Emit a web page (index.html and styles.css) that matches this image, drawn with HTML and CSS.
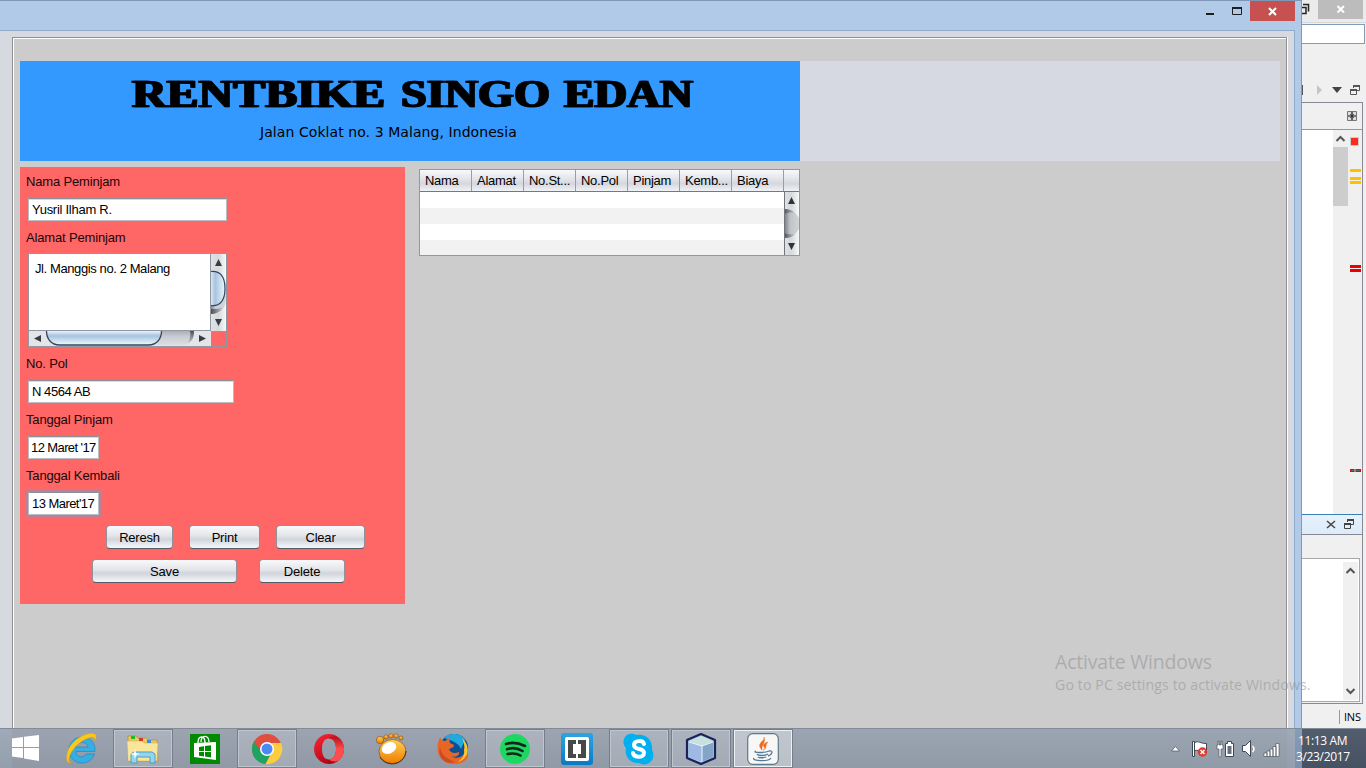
FILE: index.html
```html
<!DOCTYPE html>
<html lang="id">
<head>
<meta charset="utf-8">
<title>Rentbike Singo Edan</title>
<link rel="stylesheet" href="styles.css">
</head>
<body>
<main class="desktop">
  <section class="ide">
    <div class="ide-title"><svg width="64" height="22"><path d="M0 7.500h4v6H0M1 4.500h5.500v7" fill="none" stroke="#222" stroke-width="1.500"/><path d="M16 0h45v19H16z" fill="#bcbcbc"/><path d="m35.500 6 6.500 6.500m0-6.500-6.500 6.500" stroke="#fff" stroke-width="2"/></svg></div>
    <div class="ide-search"></div>
    <div class="ide-tools"><svg width="64" height="14"><path d="M0 2h1v10H0z" fill="#555"/><path d="m15 2 5 5-5 5z" fill="#c5c5c5"/><path d="M30 4h10l-5 6z" fill="#444"/><g fill="none" stroke="#555"><path d="M48.500 6.500h6v5h-6zM51.500 5V2.500h6v5H55"/><path d="M48 7h7M51 3h7" stroke-width="2"/></g></svg></div>
    <div class="ide-editor">
      <div class="ide-tab"><svg width="11" height="11"><path d="M.5.500h9v9h-9z" fill="#ddd" stroke="#777"/><path d="M5 1v8M1 5h8" stroke="#111" stroke-width="1.200"/><path d="m3 3 4 4m0-4L3 7" stroke="#333" stroke-width=".7"/></svg></div>
      <div class="ide-code">
        <div class="ide-scroll"><svg width="15" height="16"><path d="m3.500 11 4-4 4 4" fill="none" stroke="#555" stroke-width="2"/></svg><i class="thumb"></i></div>
        <svg class="marks" width="14" height="383"><path d="M2 6h9v9H2z" fill="#ccc"/><path d="M3 7h7v7H3z" fill="#ff2a1c"/><path d="M2 38h11v3H2zM2 46h11v3H2zM2 50h11v3H2z" fill="#ffc000"/><path d="M2 134h11v3H2zM2 138h11v3H2z" fill="#e00"/><path d="M2 338h11v3H2z" fill="#e00"/><path d="M3 339h9v1H3z" fill="#666"/><path d="M6 338h2v3H6z" fill="#888"/></svg>
      </div>
    </div>
    <div class="ide-output">
      <div class="out-tab"><svg width="60" height="19"><path d="m25 6 8 7m0-7-8 7" stroke="#444" stroke-width="1.500"/><g fill="none" stroke="#444"><path d="M42.500 8.500h6v5h-6zM45.500 7V4.500h6v5H49"/><path d="M42 9h7M45 5h7" stroke-width="2"/></g></svg></div>
      <div class="out-box"><svg width="15" height="138"><path d="m3.500 11 4-4 4 4m-8 116 4 4 4-4" fill="none" stroke="#555" stroke-width="2"/></svg></div>
    </div>
    <div class="ide-status"><span>INS</span></div>
  </section>

  <section class="window">
    <header class="titlebar"><svg class="controls" width="104" height="29"><path d="M14 12h8v2h-8z" fill="#1e1e1e"/><path d="M40.500 6.500h9v7h-9z" fill="none" stroke="#1e1e1e"/><path d="M40 7h10" stroke="#1e1e1e" stroke-width="2"/><path d="M58 0h45v20H58z" fill="#c75050"/><path d="m77 7 7 7m0-7-7 7" stroke="#fff" stroke-width="2"/></svg></header>
    <div class="client">
      <div class="etched">
        <div class="banner"><div class="brand">
          <svg class="logo" width="580" height="44"><text x="10" y="35.500" textLength="253" lengthAdjust="spacingAndGlyphs">RENTBIKE</text><text x="279" y="35.500" textLength="149" lengthAdjust="spacingAndGlyphs">SINGO</text><text x="442" y="35.500" textLength="129" lengthAdjust="spacingAndGlyphs">EDAN</text></svg>
          <p class="address">Jalan Coklat no. 3 Malang, Indonesia</p>
        </div></div>
        <div class="body">
          <form class="form">
            <label>Nama Peminjam</label>
            <div class="field name">Yusril Ilham R.</div>
            <label>Alamat Peminjam</label>
            <div class="area">
              <div class="area-text">Jl. Manggis no. 2 Malang</div>
              <svg class="vbar" width="15" height="77"><defs><linearGradient id="tr"><stop stop-color="#858a92"/><stop offset=".3" stop-color="#c8cbd1"/><stop offset="1" stop-color="#d6d8dc"/></linearGradient><linearGradient id="bl"><stop stop-color="#d5e6f5"/><stop offset=".3" stop-color="#a9c3de"/><stop offset="1" stop-color="#eaf8ff"/></linearGradient><linearGradient id="bt"><stop stop-color="#dfe2e6"/><stop offset=".5" stop-color="#d5dadd"/><stop offset="1" stop-color="#f7fafa"/></linearGradient><linearGradient id="sh"><stop stop-color="#4c5058"/><stop offset="1" stop-color="#c4c7cc"/></linearGradient></defs><path d="M0 0h15v77H0z" fill="url(#bt)"/><path d="M0 17h1c9 0 14 6 14 17v11c0 9-6 15-15 15z" fill="url(#tr)"/><path d="M0 55c6 0 9 0 12-2-2 4-6 7-12 7z" fill="url(#sh)"/><path d="M0 17.500c9-1 14 5 14 17s-5 18-14 17" fill="url(#bl)" stroke="#33475f" stroke-width="1.200"/><path d="m7.500 5 3.500 7H4zM4 65h7l-3.500 7z" fill="#393c40"/></svg>
              <svg class="hbar" width="182" height="15"><defs><linearGradient id="hb" x2="0" y2="1"><stop stop-color="#e6f2fd"/><stop offset=".35" stop-color="#a9c3de"/><stop offset="1" stop-color="#edfaff"/></linearGradient><linearGradient id="ht" x2="0" y2="1"><stop stop-color="#aaaeb6"/><stop offset=".4" stop-color="#c9ccd2"/><stop offset="1" stop-color="#dcdee1"/></linearGradient><linearGradient id="hs" x2="0" y2="1"><stop stop-color="#4c5058"/><stop offset="1" stop-color="#c4c7cc"/></linearGradient></defs><path d="M0 0h182v15H0z" fill="#e2e6e9"/><path d="M17 0h148c0 8-4 14-12 14H30C20 14 17 8 17 0z" fill="url(#ht)"/><path d="M161 0h4c0 7-2 10-6 12 2-4 3-8 2-12z" fill="url(#hs)"/><path d="M17.500 0c0 8 5 14 13 14h89c8 0 13-6 13-14" fill="url(#hb)" stroke="#33475f" stroke-width="1.300"/><path d="m5 7.500 7-3.500v7zM170 4l7 3.500-7 3.500z" fill="#393c40"/></svg>
              <div class="corner"></div>
            </div>
            <label>No. Pol</label>
            <div class="field plate">N 4564 AB</div>
            <label>Tanggal Pinjam</label>
            <div class="field date">12 Maret '17</div>
            <label>Tanggal Kembali</label>
            <div class="field date focus">13 Maret'17</div>
            <div class="buttons first"><button type="button" class="b1">Reresh</button><button type="button" class="b2">Print</button><button type="button" class="b3">Clear</button></div>
            <div class="buttons second"><button type="button" class="b4">Save</button><button type="button" class="b5">Delete</button></div>
          </form>
          <div class="table">
            <div class="thead"><span>Nama</span><span>Alamat</span><span>No.St...</span><span>No.Pol</span><span>Pinjam</span><span>Kemb...</span><span>Biaya</span></div>
            <div class="tbody"><div class="rows"></div>
              <svg width="15" height="63"><defs><linearGradient id="ts"><stop stop-color="#74777d"/><stop offset=".4" stop-color="#c0c2c7"/><stop offset="1" stop-color="#d2d4d8"/></linearGradient></defs><path d="M0 0h15v63H0z" fill="url(#bt)"/><path d="M0 17c7 0 11 3 15 9v11c-4 6-8 9-15 9z" fill="url(#ts)"/><path d="M0 17c5 0 8 1 11 4-4-1-8 0-11 1zM0 46c5 0 8-1 11-4-4 1-8 0-11-1z" fill="url(#sh)"/><path d="M7.500 5 11 12H4zM4 51h7l-3.500 7z" fill="#333"/><path d="M.5 0v63" stroke="#6f747d"/></svg>
            </div>
          </div>
        </div>
      </div>
    </div>
  </section>

  <aside class="watermark"><p class="w1">Activate Windows</p><p class="w2">Go to PC settings to activate Windows.</p></aside>

  <footer class="taskbar">
    <div class="start"><svg width="28" height="28"><path d="m1 4.500 11-1.500V13H1zM13 2.800 28 1v12H13zM1 14h11v10L1 22.500zM13 14h15v13l-15-2.500z" fill="#fff"/></svg></div>
    <div class="task"><svg width="32" height="32" viewBox="0 0 32 32"><path d="M30 18.500H11c0 6 8 7 10 2.500h8.500c-2 6-7 9-12.500 9C9 30 4 24 4 17S9 4 17 4s14 6 13 14.500zM11 14h12c-1-6-11-6-12 0z" fill="#35aee2" stroke="#1884c4" stroke-width=".6"/><path d="M6 30c-6 0-5-8-2-15C10 4 25-2 30 1c2 1 1 5 0 7 0-3-2-5-6-3C16 7 8 15 5 22c-2 5-1 7 1 8z" fill="#f8c81c" stroke="#e1a10b" stroke-width=".5"/></svg></div>
    <div class="task open"><svg width="32" height="32" viewBox="0 0 32 32"><path d="M1 3h8l2 2h8l2 2h9l1 21H1z" fill="#e9c967" stroke="#b38e2f" stroke-width=".7"/><path d="M0 8h15l2 2h14l-1 18H1z" fill="#fae69a" stroke="#cba94a" stroke-width=".5"/><path d="M4 3h4v3H4z" fill="#22b82d"/><path d="M12 5h4v3h-4z" fill="#d53a24"/><path d="M20 7h4v3h-4z" fill="#368dda"/><path d="M4 30V21l3-2h18l3 2v9h-5v-6H10v6z" fill="#96d4ee" stroke="#4a9fc4"/><path d="m8 16 1 4 4 1-4 1-1 4-1-4-4-1 4-1z" fill="#fff"/></svg></div>
    <div class="task"><svg width="32" height="32" viewBox="0 0 32 32"><path d="M1 1h30v30H1z" fill="#008a00"/><path d="m5 10 22-1v18L5 24z" fill="#fff"/><path d="M9 10c0-8 7-8 7 0m-4-1c0-7 8-8 8 0" fill="none" stroke="#fff" stroke-width="1.300"/><path d="m10 14 5-.7V18h-5zm6-.9 6-.9V18h-6zM10 19h5v4.500l-5-.7zm6 0h6v5.500l-6-.9z" fill="#008a00"/></svg></div>
    <div class="task open"><svg width="32" height="32" viewBox="0 0 32 32"><circle cx="16" cy="16" r="15" fill="#e04e3f"/><path d="M3 8.500A15 15 0 0 0 14.500 31L21 19l-10 1z" fill="#1da462"/><path d="M30 10a15 15 0 0 1-15.500 21L22 17l-5-7z" fill="#fdcd41"/><circle cx="16" cy="16" r="7" fill="#fff"/><circle cx="16" cy="16" r="5.500" fill="#4a8af4"/></svg></div>
    <div class="task"><svg width="32" height="32" viewBox="0 0 32 32"><defs><linearGradient id="op" x2=".7" y2="1"><stop stop-color="#ff2737"/><stop offset="1" stop-color="#a40012"/></linearGradient><linearGradient id="oq" x2="0" y2="1"><stop stop-color="#b3101d"/><stop offset=".5" stop-color="#ff4c4c"/></linearGradient></defs><path d="M16 1a15 15 0 1 0 0 30 15 15 0 0 0 0-30zm0 4.500c4.500 0 7 4 7 10.500s-2.500 10.500-7 10.500S9 22.500 9 16 11.500 5.500 16 5.500z" fill="url(#op)" fill-rule="evenodd"/><path d="M16 5.500c2-2 6-3 10-.7A15 15 0 0 1 26 27.200c-4 2.300-8 1.300-10-.7 4.500 0 7-4 7-10.500S20.500 5.500 16 5.500z" fill="url(#oq)"/></svg></div>
    <div class="task"><svg width="32" height="32" viewBox="0 0 32 32"><defs><linearGradient id="gm" x2="0" y2="1"><stop stop-color="#ffd057"/><stop offset="1" stop-color="#f07d00"/></linearGradient></defs><g fill="url(#gm)" stroke="#824605" stroke-width=".6"><ellipse cx="17.500" cy="18.500" rx="13.500" ry="12"/><circle cx="5" cy="7" r="3.600"/><circle cx="11" cy="4" r="2.200"/><circle cx="16" cy="3" r="2.200"/><circle cx="21" cy="3" r="2.200"/><circle cx="26" cy="5" r="2"/></g><path d="M5 24c5 10 24 10 26-6" fill="none" stroke="#41311e"/><ellipse cx="14" cy="15" rx="7.500" ry="5.500" fill="#fff" transform="rotate(-25 14 15)"/></svg></div>
    <div class="task"><svg width="32" height="32" viewBox="0 0 32 32"><circle cx="17" cy="15" r="14" fill="#0b4f94"/><path d="M7 5c6-6 17-5 21 2l-4 9c-2-6-10-9-17-11z" fill="#22a9dd"/><path d="M3 4c1 3 3 4 5 4l4-3 1 5 4 2c0 3-3 3-5 4 1 4 6 5 10 3 1 3-3 6-8 4 6 4 15 1 14-8 3 2 3 6 3 7 0 5-6 9-14 9C2 31-3 18 3 4z" fill="#e76525"/><path d="M25 5c9 8 7 21-4 24 5-4 7-7 6-12 1-3 0-8-2-12z" fill="#ffc62e"/><path d="M3 14c1 8 7 12 15 15-9 3-18-4-15-15z" fill="#cf4922"/></svg></div>
    <div class="task open"><svg width="32" height="32" viewBox="0 0 32 32"><circle cx="16" cy="16" r="15" fill="#1ed760"/><path d="M7 11c6-2 13-1 19 2M8 16.200c5-1.800 11-1 15.500 1.800M8.500 21c5-1 9-1 13 1.500" fill="none" stroke="#102817" stroke-width="2.600" stroke-linecap="round"/></svg></div>
    <div class="task"><svg width="32" height="32" viewBox="0 0 32 32"><defs><linearGradient id="br" x2="0" y2="1"><stop stop-color="#2ea5df"/><stop offset="1" stop-color="#087ac6"/></linearGradient></defs><rect width="32" height="32" rx="3" fill="url(#br)"/><rect x="4" y="4" width="24" height="24" rx="2" fill="#fff"/><path d="M7 7h8v4h-3v10h3v4H7zm10 0h8v18h-8v-4h3V11h-3z" fill="#484848"/></svg></div>
    <div class="task open"><svg width="32" height="32" viewBox="0 0 32 32"><path d="M4 2c4-2 7-1 9 0 10-2 17 5 16 15 3 5 1 12-5 14-3 1-6 0-8-1C7 31 1 23 3 15-1 11 0 5 4 2z" fill="#00aff0"/><path d="M21 11c-1-4-10-4-10 1 0 6 10 2 10 8 0 5-10 5-11 0" fill="none" stroke="#fff" stroke-width="4" stroke-linecap="round"/></svg></div>
    <div class="task open"><svg width="32" height="32" viewBox="0 0 32 32"><path d="m16 1 14 6v18l-14 6-14-6V7z" fill="#a8c7e9" stroke="#1d2159" stroke-width="2.200" stroke-linejoin="round"/><path d="m16 3 12 5-11 5L4 8z" fill="#c7e2dc"/><path d="m4 9 13 4v16L4 24z" fill="#a0b9e4"/><path d="M28 9 17 13v16l11-5z" fill="#84a5c6"/><path d="m4 9 13 4 11-4M17 13v16" fill="none" stroke="#e9f8ff"/></svg></div>
    <div class="task active"><svg width="32" height="32" viewBox="0 0 32 32"><rect x=".7" y=".7" width="30.600" height="30.600" rx="5" fill="#f7f7f7" stroke="#5e7988" stroke-width="1.200"/><path d="M17 4c2 4-9 6-2 13-1-5 4-7 2-13zm4 5c-6 2-5 4-3 6 0 1-1 2-2 2 5-2 1-4 5-8z" fill="#ef6c1a" stroke="#ef6c1a" stroke-width=".5"/><path d="M9 18c-5 2 9 2 13 0m-12 3c1 2 8 2 11 0m-10 3c1 1 6 1 8 0m3-6c5-1 3 4-1 5M7 25c-3 3 15 4 17 0" fill="none" stroke="#527c98" stroke-width="1.300"/></svg></div>
    <div class="tray"><svg width="112" height="24"><path d="m2.500 14 4-4.500 4 4.500z" fill="#fff" stroke="#59616c" stroke-width=".8"/><g fill="#fff" stroke="#3e4853"><path d="M23.500 4.500h2v15h-2zM25.500 5.500c5-2 5 1 12 1v8c-5 1-6-2-12-1z"/><path d="M56.500 6.500h2v-2h4v2h2v13h-8z"/><path d="M73.500 8.500h3l5-5v16l-5-5h-3z"/></g><path d="M58.500 9h4v8h-4z" fill="#65707c"/><path d="M49 4h1v4h2V4h1v4h1v4h-2v8h-2v-8h-2V8h1z" fill="#fff" stroke="#3e4853" stroke-width=".6"/><path d="M83.500 9c2 2 2 4 0 6" fill="none" stroke="#fff" stroke-width="1.500"/><g fill="#fff" stroke="#3e4853" stroke-width=".6"><path d="M95 16h3v3.500h-3zM98 14h3v5.500h-3zM101 12h3v7.500h-3zM104 9.500h3v10h-3zM107 6.500h3v13h-3z"/></g><circle cx="33.500" cy="15" r="4.700" fill="#df3a2b"/><path d="m31.500 13 4 4m0-4-4 4" stroke="#fff" stroke-width="1.500"/></svg></div>
    <div class="clock"><span>11:13 AM</span><span>3/23/2017</span></div>
  </footer>
</main>
</body>
</html>
```
FILE: styles.css
```css
* { box-sizing: border-box; }
body { margin: 0; overflow: hidden; font: 13px "Liberation Sans", Arial, sans-serif; color: #000; }
p { margin: 0; }
svg { display: block; flex: none; }
.desktop { position: relative; width: 1366px; height: 768px; overflow: hidden; background: #f0f0f0; }

.ide { position: absolute; left: 1302px; top: 0; width: 64px; height: 728px; display: flex; flex-direction: column; background: #f0f0f0; }
.ide-title { height: 23px; background: #ebebeb; border-bottom: 1px solid #d8d8d8; }
.ide-search { width: 63px; height: 20px; margin-top: 1px; border: 1px solid #7f9db9; border-left: 0; background: #fff; }
.ide-tools { height: 58px; padding-top: 39px; }
.ide-editor { width: 61px; height: 412px; border-top: 1px solid #898994; border-right: 1px solid #898994; }
.ide-tab { height: 27px; padding: 8px 0 0 45px; border-bottom: 1px solid #7f9db9; }
.ide-code { height: 384px; display: flex; padding-left: 31px; background: linear-gradient(90deg, #fff 31px, #f0f0f0 31px); }
.ide-scroll { width: 15px; }
.ide-scroll svg { height: 17px; }
.marks { margin-top: 1px; }
.thumb { display: block; height: 59px; background: #cdcdcd; }
.ide-output { width: 61px; height: 190px; border-top: 1px solid #3c7fb1; border-right: 1px solid #898994; border-bottom: 1px solid #898994; }
.out-tab { height: 20px; background: linear-gradient(#e7f2fc, #dcebf9); border-bottom: 1px solid #898994; }
.out-box { width: 58px; height: 144px; margin-top: 23px; display: flex; justify-content: flex-end; padding: 3px 1px 0 0; border: solid #a8a8a8; border-width: 1px 1px 1px 0; background: #fff; }
.out-box svg { background: #f0f0f0; }
.ide-status { margin: 6px 0 0 37px; height: 14px; width: 25px; padding-left: 4px; border-left: 1px solid #999; font: 11px/13px "Open Sans", sans-serif; letter-spacing: -.2px; white-space: nowrap; }

.window { position: absolute; left: 0; top: 0; width: 1302px; height: 768px; display: flex; flex-direction: column; background: #b0cae8; border-top: 1px solid #7f96b5; border-right: 1px solid #7f9abb; padding-right: 6px; }
.titlebar { display: flex; height: 29px; justify-content: flex-end; margin-right: -6px; }
.controls { margin-right: 5px; }
.client { height: 738px; border-top: 1px solid #8faccb; border-right: 1px solid #8faccb; background: #d6d9df; padding: 6px 7px 0 12px; }
.etched { height: 740px; border: 1px solid #8e8e8e; border-bottom: 0; box-shadow: inset 1px 1px #fff, 1px 0 #fff; background: #ccc; padding: 23px 6px 0 7px; }
.banner { height: 100px; background: #d6d9e1; }
.brand { width: 780px; height: 100px; background: #39f; padding: 10px 0 0 101px; }
.logo { filter: drop-shadow(2px 0 0 #000); }
.logo text { font: bold 39.500px "Liberation Serif", "Times New Roman", serif; stroke: #000; stroke-width: .6px; }
.address { margin: 7px 0 0 139px; font: 14px/20px "DejaVu Sans", sans-serif; letter-spacing: .07px; white-space: nowrap; }
.body { display: flex; align-items: flex-start; padding-top: 6px; gap: 14px; }

.form { width: 385px; height: 437px; padding: 7px 6px 0; background: #f66; display: flex; flex-direction: column; }
.form label { height: 15px; line-height: 15px; letter-spacing: -.16px; color: #1c0606; flex: none; }
.field { height: 23px; margin: 9px 0 9px 2px; padding-left: 3px; line-height: 21px; border: 1px solid #b9bdc1; border-top-color: #8d9096; box-shadow: inset 0 1px #d9dadc; background: #fff; white-space: nowrap; letter-spacing: -.27px; flex: none; }
.name { width: 199px; }
.plate { width: 206px; letter-spacing: -.45px; }
.date { width: 71px; padding-left: 2px; letter-spacing: -.6px; }
.focus { padding-left: 3px; margin-bottom: 0; box-shadow: 0 0 0 1.500px #739cc9; letter-spacing: -.55px; }
.area { width: 199px; height: 94px; margin: 8px 0 9px 2px; display: grid; grid-template: 77px 15px / 182px 15px; border: 1px solid #9297a1; flex: none; }
.area-text { background: #fff; border-right: 1px solid #9297a1; border-bottom: 1px solid #9297a1; padding: 7px 6px; line-height: 16px; letter-spacing: -.4px; white-space: nowrap; }
.corner { border-top: 1px solid #9297a1; }
.buttons { display: flex; height: 24px; flex: none; }
.first { gap: 16px; margin: 10px 0 0 80px; }
.second { gap: 22px; margin: 10px 0 0 66px; }
button { height: 24px; padding: 0; border: 1px solid #8e9299; border-bottom: 1.500px solid #555b63; border-radius: 4px; background: linear-gradient(#fafafc, #e2e4e9 45%, #d1d4db 60%, #f5f7fb); font: 13px "Liberation Sans", sans-serif; letter-spacing: -.2px; color: #000; }
.b1 { width: 67px; } .b2 { width: 71px; } .b3 { width: 89px; } .b4 { width: 145px; } .b5 { width: 86px; }

.table { width: 381px; height: 87px; margin-top: 2px; border: 1px solid #9297a1; background: #fff; }
.thead { display: flex; height: 22px; background: linear-gradient(#f8f9fb, #e0e2e7 48%, #d5d7de 65%, #eff2f6); border-bottom: 1px solid #737882; }
.thead span { width: 52px; padding-left: 5px; line-height: 22px; border-right: 1px solid #999da5; letter-spacing: -.28px; white-space: nowrap; }
.tbody { display: flex; }
.rows { width: 364px; height: 63px; background: repeating-linear-gradient(#fff 0 16px, #f2f2f2 16px 32px); }

.watermark { position: absolute; left: 1055px; top: 650px; color: rgba(150,150,150,.6); font-family: "Open Sans", sans-serif; white-space: nowrap; }
.w1 { font-size: 19.500px; line-height: 24px; letter-spacing: -.2px; }
.w2 { font-size: 14.200px; line-height: 22px; letter-spacing: .08px; }

.taskbar { position: absolute; left: 0; top: 728px; width: 1366px; height: 40px; display: flex; align-items: stretch; border-top: 1px solid #828c99; background: linear-gradient(rgba(255,255,255,.05), rgba(0,0,0,.04)), linear-gradient(90deg, #9aa5b4 12px, #969fac 12px, #96a1ae 1287px, #9aa5b5 1287px, #9aa5b5 1295px, #7f97b4 1295px, #7f97b4 1302px, #495466 1302px); }
.start { width: 51px; padding: 5px 0 0 11px; }
.task { width: 60px; margin-right: 2px; display: flex; justify-content: center; padding-top: 3px; border: 1px solid transparent; }
.open { border-color: #757e8a; background: rgba(255,255,255,.17); box-shadow: inset 0 0 0 1px #c0c6cf; }
.active { border-color: #757e8a; background: rgba(255,255,255,.38); box-shadow: inset 0 0 0 1px #eef0f3; }
.tray { flex: none; width: 127px; margin-left: 374px; padding-top: 8px; }
.clock { display: flex; flex-direction: column; flex: none; width: 70px; padding-top: 4px; color: #fff; font: 12px/16px "Open Sans", sans-serif; letter-spacing: -.35px; white-space: nowrap; }
.clock span:first-child { padding-left: 2px; }
```
